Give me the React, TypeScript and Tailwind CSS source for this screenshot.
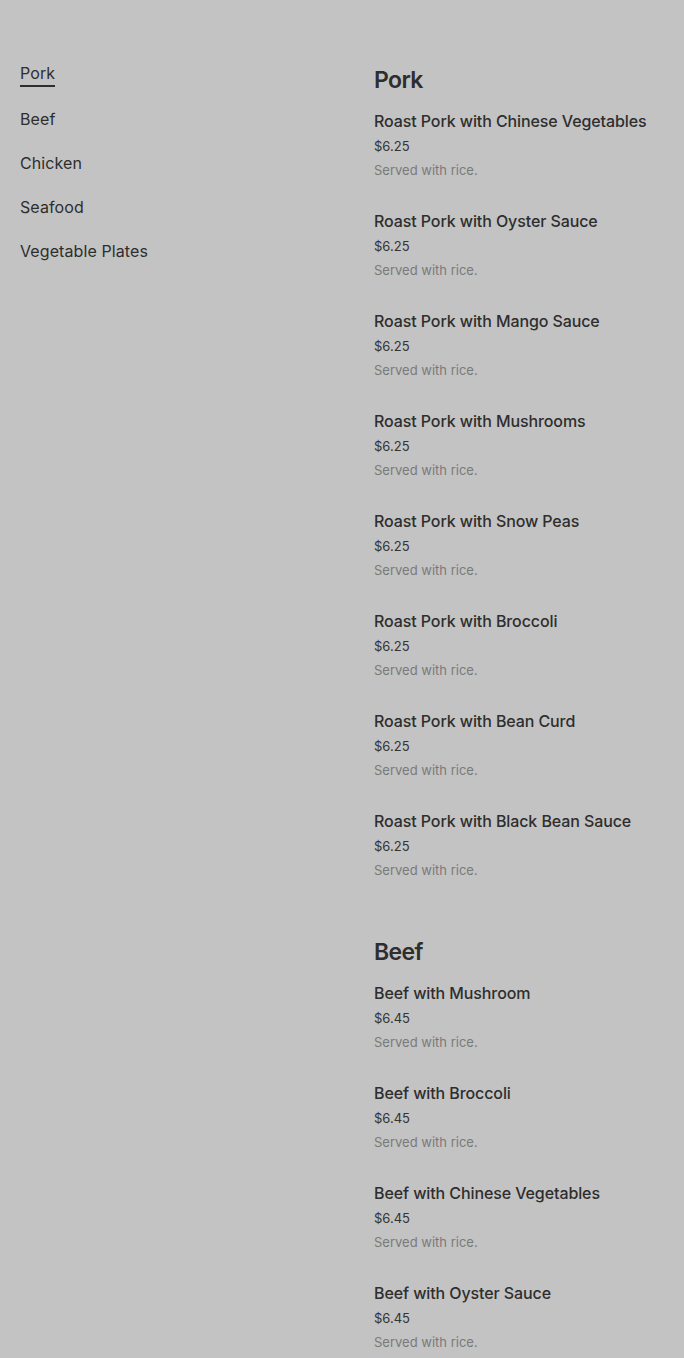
const sections = [
  {
    title: 'Pork',
    price: '$6.25',
    items: [
      'Roast Pork with Chinese Vegetables',
      'Roast Pork with Oyster Sauce',
      'Roast Pork with Mango Sauce',
      'Roast Pork with Mushrooms',
      'Roast Pork with Snow Peas',
      'Roast Pork with Broccoli',
      'Roast Pork with Bean Curd',
      'Roast Pork with Black Bean Sauce',
    ],
  },
  {
    title: 'Beef',
    price: '$6.45',
    items: [
      'Beef with Mushroom',
      'Beef with Broccoli',
      'Beef with Chinese Vegetables',
      'Beef with Oyster Sauce',
    ],
  },
];

const nav = ['Pork', 'Beef', 'Chicken', 'Seafood', 'Vegetable Plates'];

export default function App() {
  return (
    <div
      className="min-h-screen bg-[#c3c3c3] text-[#2e2e2e] h-[1358px] overflow-hidden"
      style={{ fontFamily: 'Inter, "Noto Sans", sans-serif' }}
    >
      <div className="flex px-5 pt-[61px]">
        {/* Category nav */}
        <nav className="w-[354px] shrink-0">
          <ul className="flex flex-col gap-5">
            {nav.map((n, i) => (
              <li key={n}>
                <a
                  className={`inline-block text-[16px] leading-6 tracking-[0.1px] ${
                    i === 0 ? 'border-b-2 border-[#2e2e2e]' : ''
                  }`}
                >
                  {n}
                </a>
              </li>
            ))}
          </ul>
        </nav>

        {/* Menu */}
        <div className="flex-1 pt-[3px] flex flex-col gap-[54px]">
          {sections.map((s) => (
            <section key={s.title}>
              <h2 className="text-[23px] leading-8 font-semibold tracking-[-0.6px] mb-[13px]">
                {s.title}
              </h2>
              <div className="flex flex-col gap-[27px]">
                {s.items.map((item) => (
                  <div key={item}>
                    <div className="text-[16px] leading-6 font-medium tracking-[-0.1px]">{item}</div>
                    <div className="mt-px text-[13px] leading-6 text-[#333]">{s.price}</div>
                    <div className="text-[13px] leading-6 text-[#7a7a7a]">Served with rice.</div>
                  </div>
                ))}
              </div>
            </section>
          ))}
        </div>
      </div>
    </div>
  );
}
